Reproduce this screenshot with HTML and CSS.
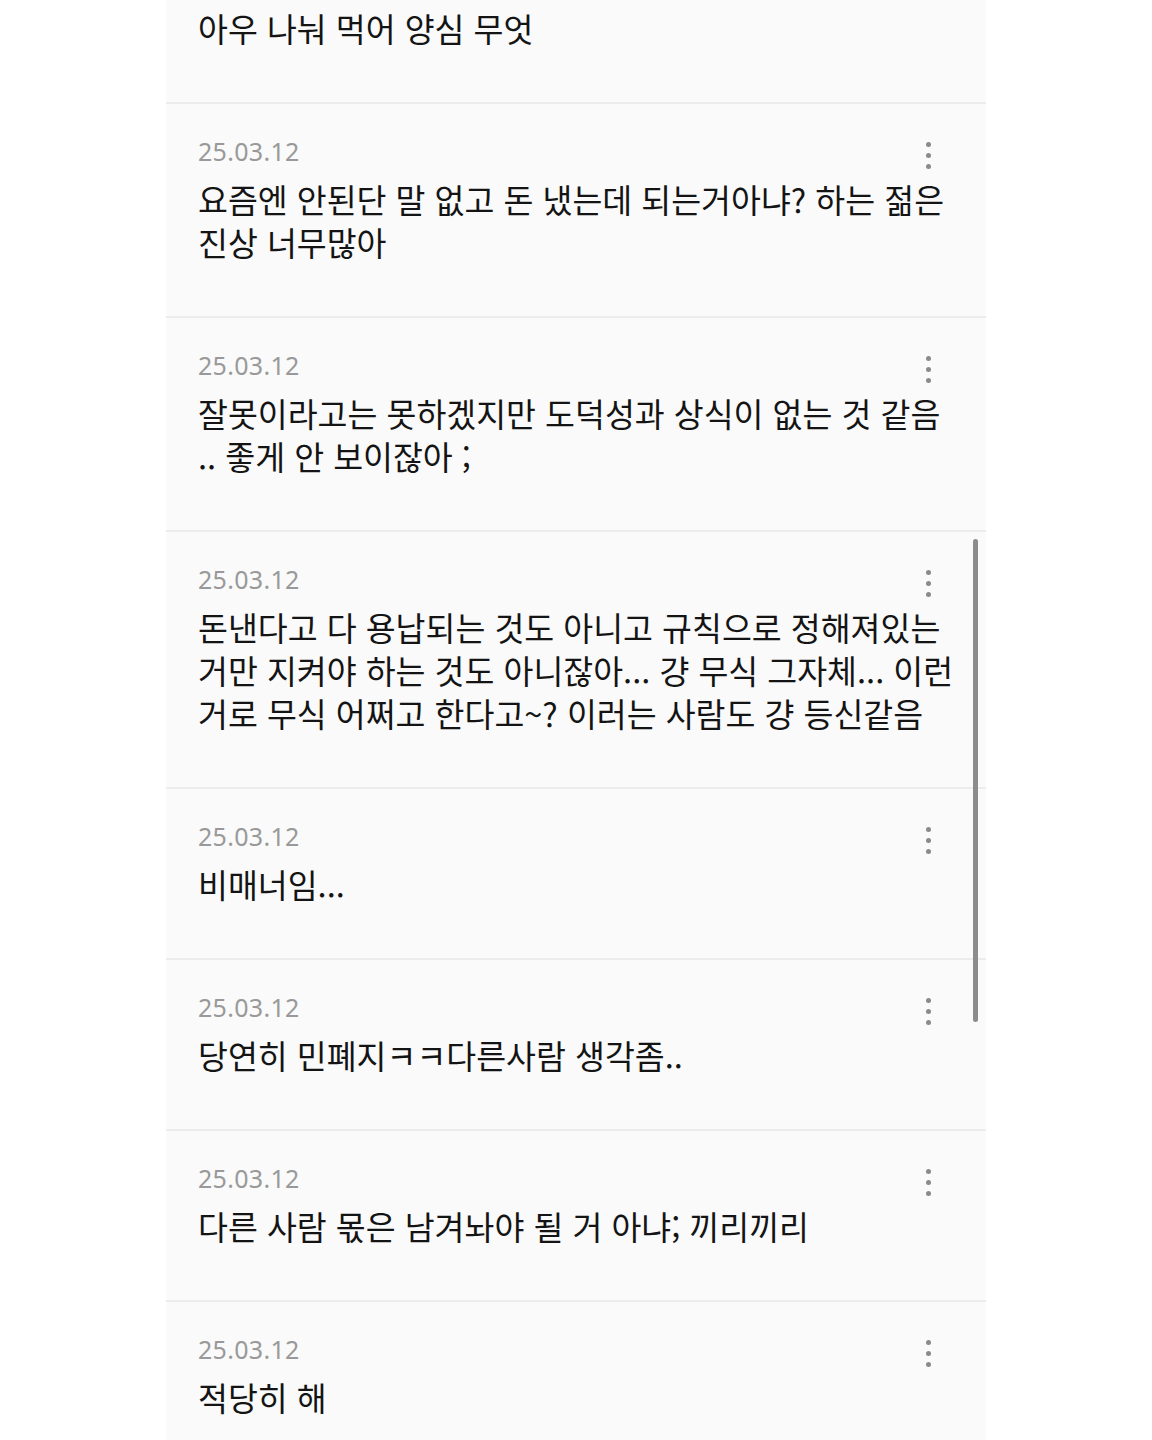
FILE: index.html
```html
<!DOCTYPE html>
<html lang="ko">
<head>
<meta charset="utf-8">
<title>댓글</title>
<link rel="stylesheet" href="styles.css">
</head>
<body>
<main class="feed">
  <ul class="comments">
    <li class="comment comment--cut">
      <p class="comment__body">아우 나눠 먹어 양심 무엇</p>
    </li>
    <li class="comment">
      <div class="comment__head">
        <span class="comment__date">25.03.12</span>
        <button class="comment__more" aria-label="더보기"><i></i><i></i><i></i></button>
      </div>
      <p class="comment__body">요즘엔 안된단 말 없고 돈 냈는데 되는거아냐? 하는 젊은<br>진상 너무많아</p>
    </li>
    <li class="comment">
      <div class="comment__head">
        <span class="comment__date">25.03.12</span>
        <button class="comment__more" aria-label="더보기"><i></i><i></i><i></i></button>
      </div>
      <p class="comment__body">잘못이라고는 못하겠지만 도덕성과 상식이 없는 것 같음<br>.. 좋게 안 보이잖아 ;</p>
    </li>
    <li class="comment">
      <div class="comment__head">
        <span class="comment__date">25.03.12</span>
        <button class="comment__more" aria-label="더보기"><i></i><i></i><i></i></button>
      </div>
      <p class="comment__body">돈낸다고 다 용납되는 것도 아니고 규칙으로 정해져있는<br>거만 지켜야 하는 것도 아니잖아... 걍 무식 그자체... 이런<br>거로 무식 어쩌고 한다고~? 이러는 사람도 걍 등신같음</p>
    </li>
    <li class="comment">
      <div class="comment__head">
        <span class="comment__date">25.03.12</span>
        <button class="comment__more" aria-label="더보기"><i></i><i></i><i></i></button>
      </div>
      <p class="comment__body">비매너임...</p>
    </li>
    <li class="comment">
      <div class="comment__head">
        <span class="comment__date">25.03.12</span>
        <button class="comment__more" aria-label="더보기"><i></i><i></i><i></i></button>
      </div>
      <p class="comment__body">당연히 민폐지ㅋㅋ다른사람 생각좀..</p>
    </li>
    <li class="comment">
      <div class="comment__head">
        <span class="comment__date">25.03.12</span>
        <button class="comment__more" aria-label="더보기"><i></i><i></i><i></i></button>
      </div>
      <p class="comment__body">다른 사람 몫은 남겨놔야 될 거 아냐; 끼리끼리</p>
    </li>
    <li class="comment">
      <div class="comment__head">
        <span class="comment__date">25.03.12</span>
        <button class="comment__more" aria-label="더보기"><i></i><i></i><i></i></button>
      </div>
      <p class="comment__body">적당히 해</p>
    </li>
  </ul>
  <div class="scrollbar" aria-hidden="true"></div>
</main>
</body>
</html>
```

FILE: styles.css
```css
* {
  box-sizing: border-box;
}

html,
body {
  margin: 0;
  height: 1440px;
  overflow: hidden;
  background: #ffffff;
}

body {
  font-family: "Noto Sans CJK KR", "Noto Sans", sans-serif;
  color: #141414;
}

.feed {
  position: relative;
  width: 820px;
  height: 1440px;
  margin: 0 auto;
  background: #fafafa;
  overflow: hidden;
}

.comments {
  list-style: none;
  margin: 0;
  padding: 0;
}

.comment {
  padding: 31px 32px 53px;
  border-bottom: 2px solid #ececec;
}

/* first item is scrolled partly out of view */
.comment--cut {
  padding-top: 6px;
  padding-bottom: 53px;
}

.comment__head {
  display: flex;
  align-items: center;
  justify-content: space-between;
  height: 32px;
  margin-bottom: 10px;
}

.comment__date {
  font-family: "Noto Sans", "Noto Sans CJK KR", sans-serif;
  font-size: 25px;
  line-height: 32px;
  color: #999999;
  letter-spacing: 0.3px;
}

.comment__more {
  display: flex;
  flex-direction: column;
  align-items: center;
  gap: 6px;
  margin: 8px 23px 0 0;
  padding: 0;
  border: 0;
  background: none;
}

.comment__more i {
  display: block;
  width: 5px;
  height: 5px;
  border-radius: 50%;
  background: #8a8a8a;
}

.comment__body {
  margin: 0;
  font-size: 32.5px;
  line-height: 43px;
  letter-spacing: 0;
  white-space: nowrap;
}

.scrollbar {
  position: absolute;
  top: 539px;
  right: 8px;
  width: 5px;
  height: 483px;
  border-radius: 3px;
  background: #8c8c8c;
}
```
